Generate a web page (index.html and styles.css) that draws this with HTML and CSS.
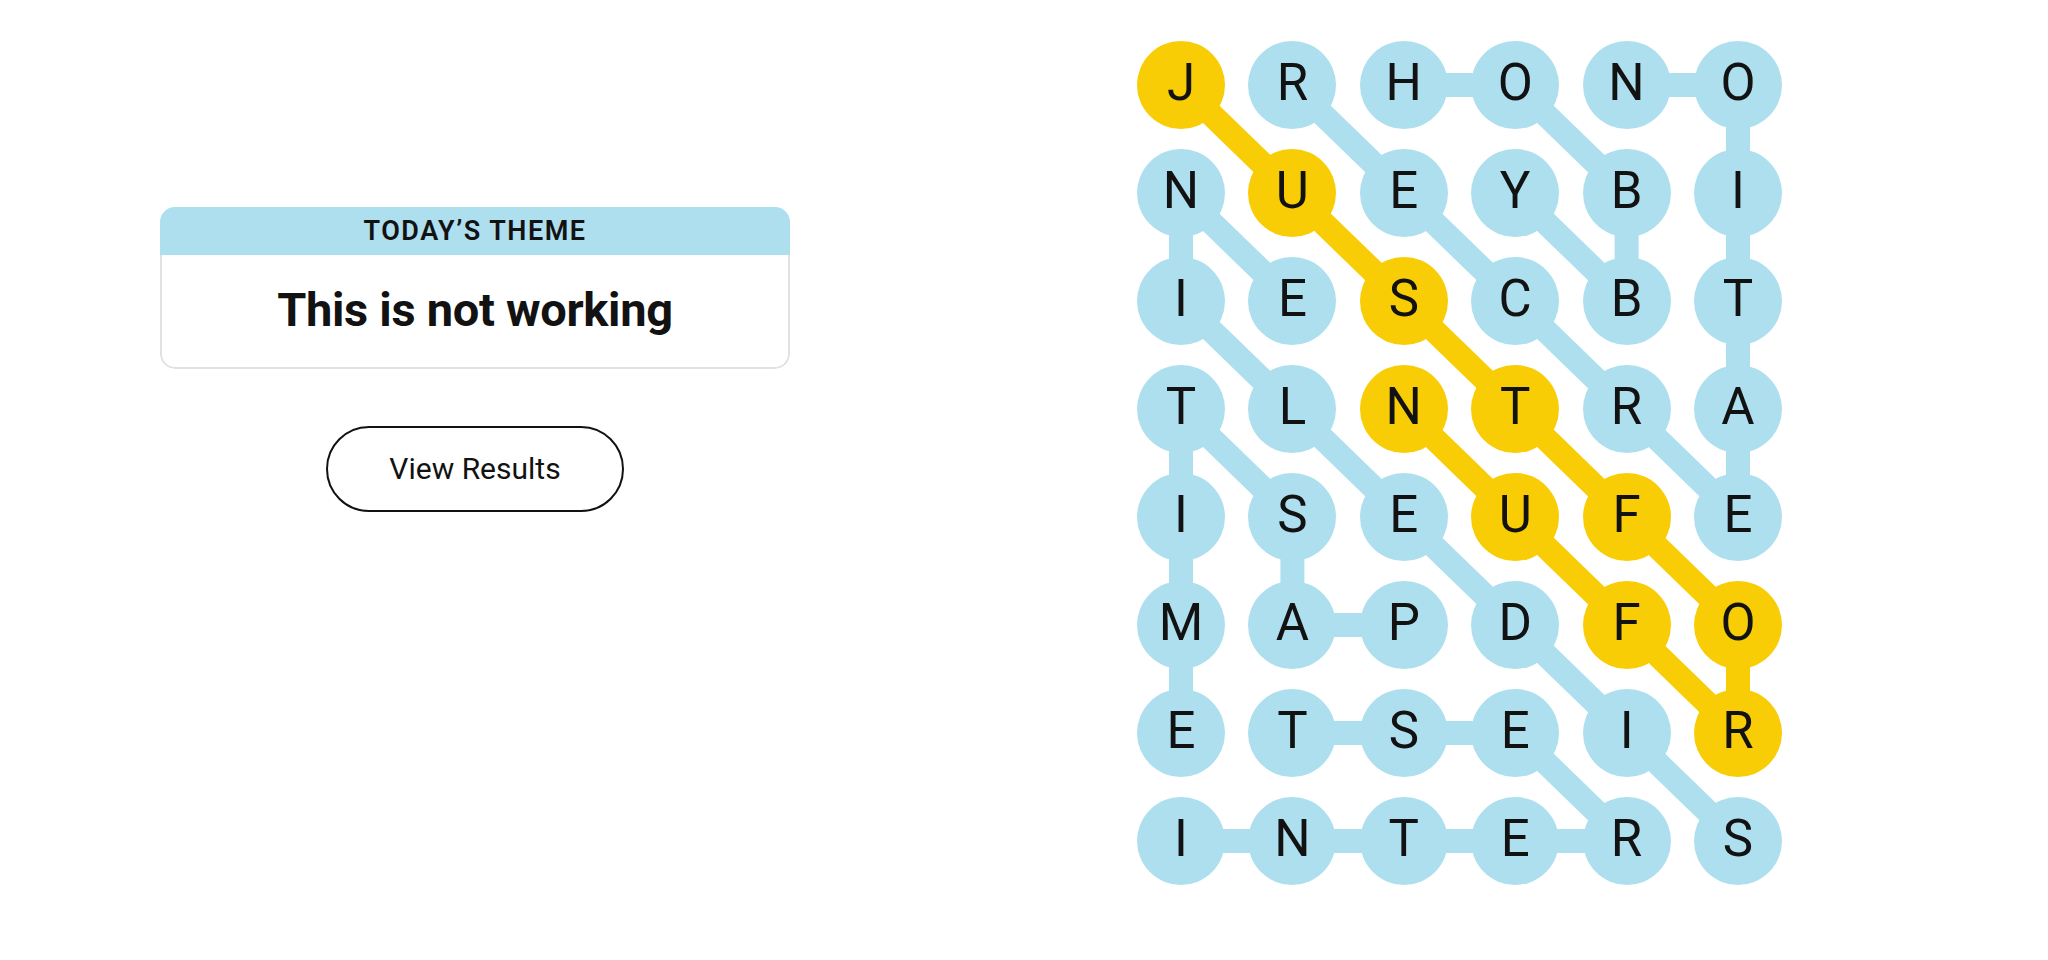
FILE: index.html
```html
<!DOCTYPE html>
<html lang="en">
<head>
<meta charset="utf-8">
<title>Strands</title>
<link rel="stylesheet" href="styles.css">
</head>
<body>
<main class="game">
  <section class="sidebar">
    <div class="theme-card">
      <div class="theme-header">TODAY’S THEME</div>
      <div class="theme-body">This is not working</div>
    </div>
    <button class="results-btn">View Results</button>
  </section>
  <section class="board">
    <svg class="connectors" viewBox="0 0 645 844" width="645" height="844" aria-hidden="true">
      <g class="found" fill="none" stroke-width="24" stroke-linejoin="round">
        <polyline points="266.8,44 378.2,44 489.6,152 489.6,260 378.2,152"/>
        <polyline points="155.4,44 266.8,152 378.2,260 489.6,368 601,476 601,368 601,260 601,152 601,44 489.6,44"/>
        <polyline points="601,800 489.6,692 378.2,584 266.8,476 155.4,368 44,260 44,152 155.4,260"/>
        <polyline points="266.8,584 155.4,584 155.4,476 44,368 44,476 44,584 44,692"/>
        <polyline points="44,800 155.4,800 266.8,800 378.2,800 489.6,800 378.2,692 266.8,692 155.4,692"/>
      </g>
      <g class="spangram" fill="none" stroke-width="24" stroke-linejoin="round">
        <polyline points="44,44 155.4,152 266.8,260 378.2,368 489.6,476 601,584 601,692 489.6,584 378.2,476 266.8,368"/>
      </g>
    </svg>
    <div class="grid">
      <div class="cell span">J</div><div class="cell">R</div><div class="cell">H</div><div class="cell">O</div><div class="cell">N</div><div class="cell">O</div>
      <div class="cell">N</div><div class="cell span">U</div><div class="cell">E</div><div class="cell">Y</div><div class="cell">B</div><div class="cell">I</div>
      <div class="cell">I</div><div class="cell">E</div><div class="cell span">S</div><div class="cell">C</div><div class="cell">B</div><div class="cell">T</div>
      <div class="cell">T</div><div class="cell">L</div><div class="cell span">N</div><div class="cell span">T</div><div class="cell">R</div><div class="cell">A</div>
      <div class="cell">I</div><div class="cell">S</div><div class="cell">E</div><div class="cell span">U</div><div class="cell span">F</div><div class="cell">E</div>
      <div class="cell">M</div><div class="cell">A</div><div class="cell">P</div><div class="cell">D</div><div class="cell span">F</div><div class="cell span">O</div>
      <div class="cell">E</div><div class="cell">T</div><div class="cell">S</div><div class="cell">E</div><div class="cell">I</div><div class="cell span">R</div>
      <div class="cell">I</div><div class="cell">N</div><div class="cell">T</div><div class="cell">E</div><div class="cell">R</div><div class="cell">S</div>
    </div>
  </section>
</main>
</body>
</html>
```

FILE: styles.css
```css
html, body {
  margin: 0;
  padding: 0;
  background: #ffffff;
}

body {
  font-family: Roboto, "Liberation Sans", Arial, sans-serif;
  color: #121212;
  width: 2048px;
  height: 960px;
  overflow: hidden;
}

.game {
  display: flex;
  align-items: flex-start;
}

.sidebar {
  width: 950px;
  flex: none;
  display: flex;
  flex-direction: column;
  align-items: center;
  padding-top: 207px;
}

.theme-card {
  width: 630px;
  border-radius: 15px;
  overflow: hidden;
}

.theme-header {
  height: 48px;
  background: #aedfee;
  display: flex;
  align-items: center;
  justify-content: center;
  font-size: 27px;
  font-weight: 600;
  letter-spacing: 1.5px;
  color: #121212;
}

.theme-body {
  height: 112px;
  border: 2px solid #e1e1e1;
  border-top: none;
  border-radius: 0 0 15px 15px;
  display: flex;
  align-items: center;
  justify-content: center;
  padding-bottom: 4px;
  box-sizing: border-box;
  height: 114px;
  font-size: 47px;
  font-weight: 700;
  letter-spacing: -0.3px;
  color: #121212;
}

.results-btn {
  margin-top: 57px;
  width: 298px;
  height: 86px;
  border: 2px solid #121212;
  border-radius: 43px;
  background: #ffffff;
  font-family: Roboto, "Liberation Sans", Arial, sans-serif;
  font-size: 30px;
  font-weight: 400;
  color: #121212;
  padding: 0 0 2px 0;
  cursor: pointer;
}

.board {
  position: relative;
  margin-left: 187px;
  margin-top: 41px;
  width: 645px;
  height: 844px;
  flex: none;
}

.connectors {
  position: absolute;
  left: 0;
  top: 0;
}

.connectors .found {
  stroke: #aedfee;
}

.connectors .spangram {
  stroke: #f8cd05;
}

.grid {
  position: relative;
  display: grid;
  grid-template-columns: repeat(6, 88px);
  grid-auto-rows: 88px;
  column-gap: 23.4px;
  row-gap: 20px;
}

.cell {
  width: 88px;
  height: 88px;
  border-radius: 50%;
  background: #aedfee;
  display: flex;
  align-items: center;
  justify-content: center;
  box-sizing: border-box;
  padding-bottom: 6px;
  font-size: 51px;
  font-weight: 400;
  line-height: 1;
  color: #121212;
}

.cell.span {
  background: #f8cd05;
}
```
